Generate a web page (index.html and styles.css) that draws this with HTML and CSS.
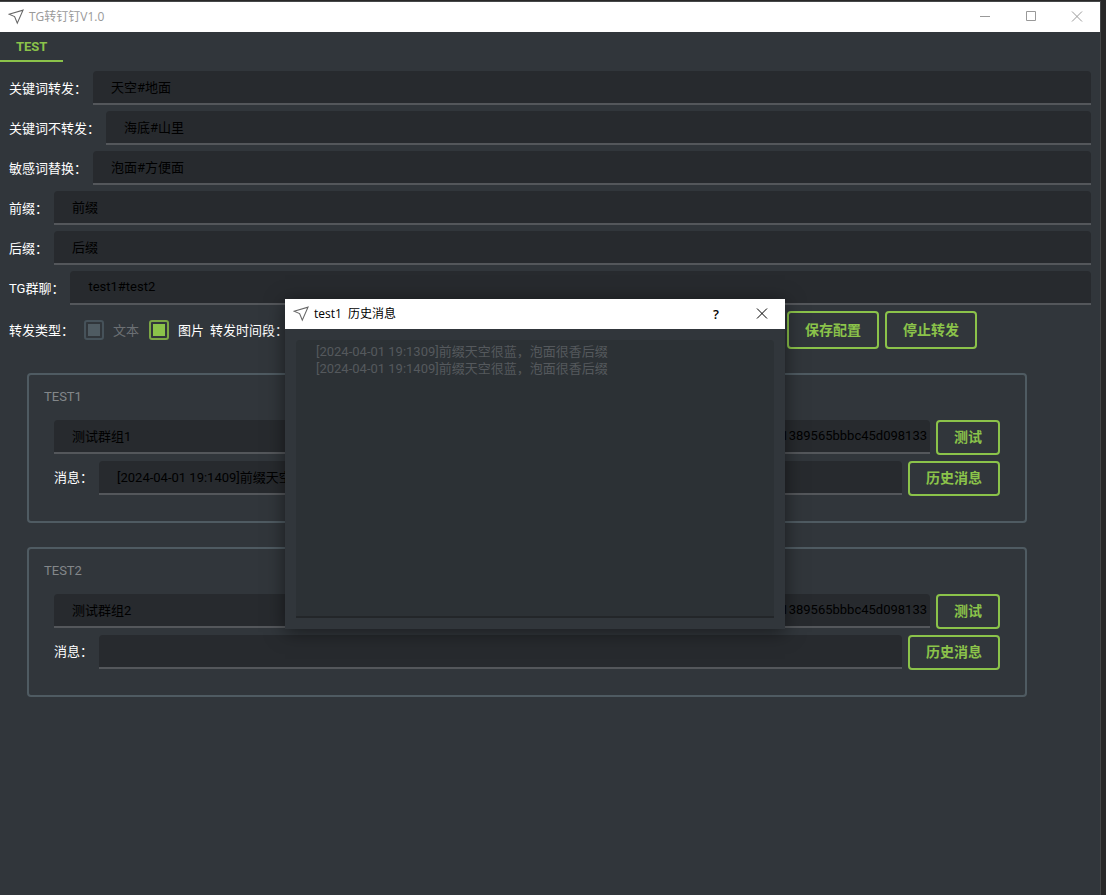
FILE: index.html
```html
<!DOCTYPE html>
<html lang="zh-CN">
<head>
<meta charset="utf-8">
<title>TG转钉钉V1.0</title>
<link rel="stylesheet" href="styles.css">
</head>
<body>
<main class="window">
  <header class="titlebar">
    <svg class="logo" width="16" height="16" viewBox="0 0 16 16"><path d="M1 5.2 15 1.2 9.3 14.2 6.6 7.6Z"/></svg>
    <h1 class="title">TG转钉钉V1.0</h1>
    <button class="winbtn" type="button" aria-label="最小化"><svg width="12" height="12" viewBox="0 0 12 12"><path d="M1 5.5h10"/></svg></button>
    <button class="winbtn" type="button" aria-label="最大化"><svg width="12" height="12" viewBox="0 0 12 12"><path d="M1.5 .5h9v9h-9z"/></svg></button>
    <button class="winbtn" type="button" aria-label="关闭"><svg width="12" height="12" viewBox="0 0 12 12"><path d="M1 .5l10 10M11 .5l-10 10"/></svg></button>
  </header>
  <nav class="tabs"><button class="tab" type="button">TEST</button></nav>
  <form class="form">
    <div class="row"><label for="kw">关键词转发：</label><input class="field" id="kw" type="text" value="天空#地面"></div>
    <div class="row"><label for="nokw">关键词不转发：</label><input class="field" id="nokw" type="text" value="海底#山里"></div>
    <div class="row"><label for="swap">敏感词替换：</label><input class="field" id="swap" type="text" value="泡面#方便面"></div>
    <div class="row"><label for="prefix">前缀：</label><input class="field" id="prefix" type="text" value="前缀"></div>
    <div class="row"><label for="suffix">后缀：</label><input class="field" id="suffix" type="text" value="后缀"></div>
    <div class="row"><label for="chats">TG群聊：</label><input class="field" id="chats" type="text" value="test1#test2"></div>
    <div class="row options">
      <span class="kind">转发类型：</span>
      <label class="check muted"><input type="checkbox" checked disabled>文本</label>
      <label class="check"><input type="checkbox" checked>图片</label>
      <label for="period">转发时间段：</label>
      <input class="field period" id="period" type="text">
      <button class="btn tall" type="button">保存配置</button>
      <button class="btn tall" type="button">停止转发</button>
    </div>
    <fieldset class="group">
      <div class="group-title">TEST1</div>
      <div class="row">
        <input class="field" type="text" aria-label="群组" value="测试群组1">
        <input class="field token" type="text" aria-label="令牌" value="c1389565bbbc45d098133">
        <button class="btn" type="button">测试</button>
      </div>
      <div class="row">
        <label for="msg1">消息：</label>
        <input class="field" id="msg1" type="text" value="[2024-04-01 19:1409]前缀天空很蓝，泡面很香后缀">
        <button class="btn" type="button">历史消息</button>
      </div>
    </fieldset>
    <fieldset class="group">
      <div class="group-title">TEST2</div>
      <div class="row">
        <input class="field" type="text" aria-label="群组" value="测试群组2">
        <input class="field token" type="text" aria-label="令牌" value="c1389565bbbc45d098133">
        <button class="btn" type="button">测试</button>
      </div>
      <div class="row">
        <label for="msg2">消息：</label>
        <input class="field" id="msg2" type="text">
        <button class="btn" type="button">历史消息</button>
      </div>
    </fieldset>
  </form>
</main>
<section class="dialog" role="dialog" aria-labelledby="dlg-title">
  <header class="titlebar">
    <svg class="logo" width="16" height="16" viewBox="0 0 16 16"><path d="M1 5.2 15 1.2 9.3 14.2 6.6 7.6Z"/></svg>
    <h2 class="title" id="dlg-title">test1&nbsp; 历史消息</h2>
    <button class="winbtn help" type="button" aria-label="帮助">?</button>
    <button class="winbtn" type="button" aria-label="关闭"><svg width="12" height="12" viewBox="0 0 12 12"><path d="M1 .5l10 10M11 .5l-10 10"/></svg></button>
  </header>
  <textarea class="history" aria-label="历史消息" disabled>[2024-04-01 19:1309]前缀天空很蓝，泡面很香后缀
[2024-04-01 19:1409]前缀天空很蓝，泡面很香后缀</textarea>
</section>
</body>
</html>
```

FILE: styles.css
```css
* { box-sizing: border-box; }

body {
  margin: 0;
  min-height: 100vh;
  padding: 2px 6px 0 0;
  display: flex;
  background: #282828;
  font: 13px/17px Roboto, "Noto Sans CJK SC", sans-serif;
  color: #fff;
}

input, button, textarea { font: inherit; }

.window {
  flex: 1;
  min-width: 0;
  background: #31363b;
  box-shadow: 0 0 0 1px #454748;
}

.titlebar {
  display: flex;
  align-items: center;
  height: 30px;
  padding-left: 8px;
  background: #fff;
  color: #999;
}

.logo { fill: none; stroke: #666; stroke-width: 1.1; }

.title {
  flex: 1;
  margin: 0 0 0 5px;
  font: 12px/16px "Open Sans", "Noto Sans CJK SC", sans-serif;
}

.winbtn {
  width: 46px;
  height: 30px;
  padding: 0;
  border: 0;
  background: none;
  color: inherit;
  display: flex;
  align-items: center;
  justify-content: center;
}

.winbtn svg { fill: none; stroke: currentColor; }

.tabs { display: flex; height: 30px; }

.tab {
  padding: 0 16px;
  border: 0;
  border-bottom: 2px solid #8bc34a;
  background: none;
  color: #8bc34a;
  font-weight: 700;
}

.form {
  padding: 9px;
  display: flex;
  flex-direction: column;
  gap: 6px;
}

.row { display: flex; align-items: center; gap: 6px; }
.row label { white-space: nowrap; }

.field {
  flex: 1;
  min-width: 0;
  height: 34px;
  padding: 0 18px 1px;
  border: 0;
  border-bottom: 2px solid #54575b;
  border-radius: 4px 4px 0 0;
  background: #272a2e;
  color: #000;
  outline: 0;
}

.token { padding: 0 3px 1px; text-align: right; }

.period { flex: 0 1 487px; }

.kind { margin-right: 4px; }

.check { display: flex; align-items: center; gap: 9px; }
.check.muted { margin-right: 4px; color: #6c7074; }

.check input {
  appearance: none;
  width: 20px;
  height: 20px;
  margin: 0;
  border: 2px solid #7ba644;
  border-radius: 3px;
  padding: 2px;
  background: #8bc34a content-box;
}

.check input:disabled { border-color: #46525a; background-color: #4f5b62; }

.btn {
  height: 35px;
  padding: 0 16px;
  border: 2px solid #8bc34a;
  border-radius: 4px;
  background: transparent;
  color: #8bc34a;
  font-size: 14px;
  font-weight: 700;
  white-space: nowrap;
}

.btn.tall { height: 38px; }

.group {
  display: flex;
  flex-direction: column;
  gap: 6px;
  min-width: 0;
  margin: 18px 64px 0 18px;
  padding: 13px 25px 25px;
  border: 2px solid #4f5b62;
  border-radius: 4px;
}

.group .row { align-items: flex-start; }
.group .row label { line-height: 34px; }

.group-title {
  margin: 0 0 9px -10px;
  color: #83878a;
}

.dialog {
  position: absolute;
  left: 285px;
  top: 299px;
  width: 500px;
  display: flex;
  flex-direction: column;
  background: #31363b;
  box-shadow: 0 3px 18px rgba(0, 0, 0, 0.5);
}

.dialog .titlebar { color: #000; }
.help { font: 600 13px/16px "Open Sans", sans-serif; }

.history {
  height: 278px;
  margin: 11px;
  padding: 3px 20px;
  border: 0;
  border-bottom: 2px solid #232629;
  border-radius: 4px 4px 0 0;
  background: #2c3135;
  color: #55595d;
  resize: none;
}
```
